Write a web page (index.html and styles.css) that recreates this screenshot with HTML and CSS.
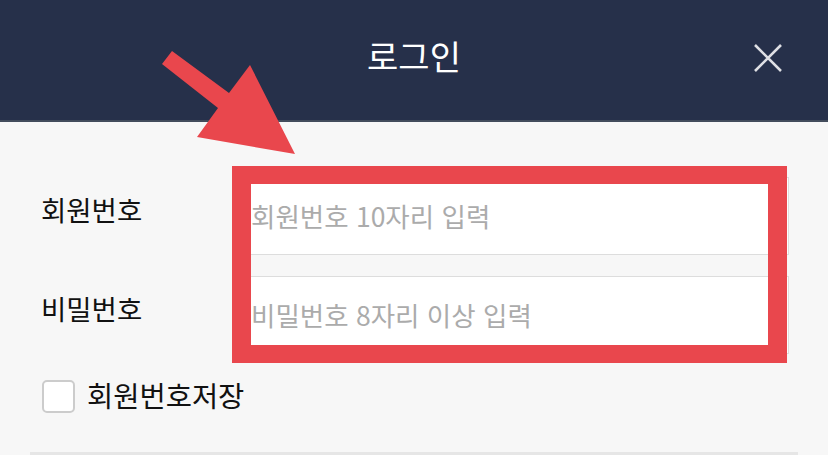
FILE: index.html
```html
<!DOCTYPE html>
<html lang="ko">
<head>
<meta charset="utf-8">
<title>로그인</title>
<link rel="stylesheet" href="styles.css">
</head>
<body>
<header class="top-bar">
  <div class="top-spacer"></div>
  <h1 class="top-title">로그인</h1>
  <button class="close-btn" type="button" aria-label="닫기">
    <svg width="30" height="30" viewBox="0 0 30 30"><path d="M2 2 L28 28 M28 2 L2 28" stroke="#dfe0e5" stroke-width="2.6" fill="none"/></svg>
  </button>
</header>
<main class="login-form">
  <div class="field-row">
    <label class="field-label" for="memberNo">회원번호</label>
    <input class="field-input" id="memberNo" type="text" placeholder="회원번호 10자리 입력">
  </div>
  <div class="field-row">
    <label class="field-label" for="memberPw">비밀번호</label>
    <input class="field-input" id="memberPw" type="password" placeholder="비밀번호 8자리 이상 입력">
  </div>
  <label class="save-row">
    <span class="checkbox"></span>
    <span class="save-text">회원번호저장</span>
  </label>
</main>
<div class="divider"></div>
<div class="callout-box"></div>
<svg class="callout-arrow" width="828" height="200" viewBox="0 0 828 200">
  <polygon points="172,51 229,93 250,65 295,154 197,137 218,108 162,64" fill="#e9474d"/>
</svg>
</body>
</html>
```

FILE: styles.css
```css
* { box-sizing: border-box; }
html, body {
  margin: 0;
  padding: 0;
  background: #f7f7f7;
  font-family: "Noto Sans CJK KR", "Noto Sans", sans-serif;
  overflow: hidden;
}
.top-bar {
  height: 122px;
  background: #26304a;
  border-bottom: 2px solid #434c5c;
  display: grid;
  grid-template-columns: 1fr auto 1fr;
  align-items: center;
}
.top-title {
  margin: 0;
  padding-bottom: 8px;
  font-size: 34px;
  font-weight: 400;
  line-height: 1;
  color: #ffffff;
}
.close-btn {
  justify-self: end;
  margin-right: 45px;
  margin-bottom: 4px;
  padding: 0;
  border: 0;
  background: transparent;
  width: 30px;
  height: 30px;
}
.close-btn svg { display: block; }
.login-form {
  padding: 55px 39px 0 41px;
}
.field-row {
  display: flex;
  align-items: flex-start;
  margin-bottom: 21px;
}
.field-row + .field-row { margin-bottom: 0; }
.field-label {
  width: 199px;
  flex: none;
  padding-top: 16px;
  font-size: 27.5px;
  line-height: 1.2;
  color: #111;
}
.field-input {
  flex: 1;
  height: 78px;
  border: 1px solid #dddddd;
  background: #fff;
  padding: 0 0 2px 10px;
  font-family: "Noto Sans CJK KR", "Noto Sans", sans-serif;
  font-size: 26.5px;
  color: #333;
  outline: none;
  border-radius: 0;
}
.field-input::placeholder { color: #ababab; }
.save-row {
  display: flex;
  align-items: center;
  height: 33px;
  margin-top: 26px;
  margin-left: 1px;
  gap: 12px;
}
.checkbox {
  width: 33px;
  height: 33px;
  border: 2px solid #cccccc;
  border-radius: 5px;
  background: #fff;
}
.save-text {
  font-size: 28.5px;
  line-height: 33px;
  color: #111;
  padding-bottom: 5px;
}
.divider {
  margin: 39px 30px 0;
  height: 3px;
  background: #e6e6e6;
}
.callout-box {
  position: absolute;
  left: 232px;
  top: 166px;
  width: 555px;
  height: 197px;
  border-style: solid;
  border-color: #e9474d;
  border-width: 18px 19px;
}
.callout-arrow {
  position: absolute;
  left: 0;
  top: 0;
}
```
